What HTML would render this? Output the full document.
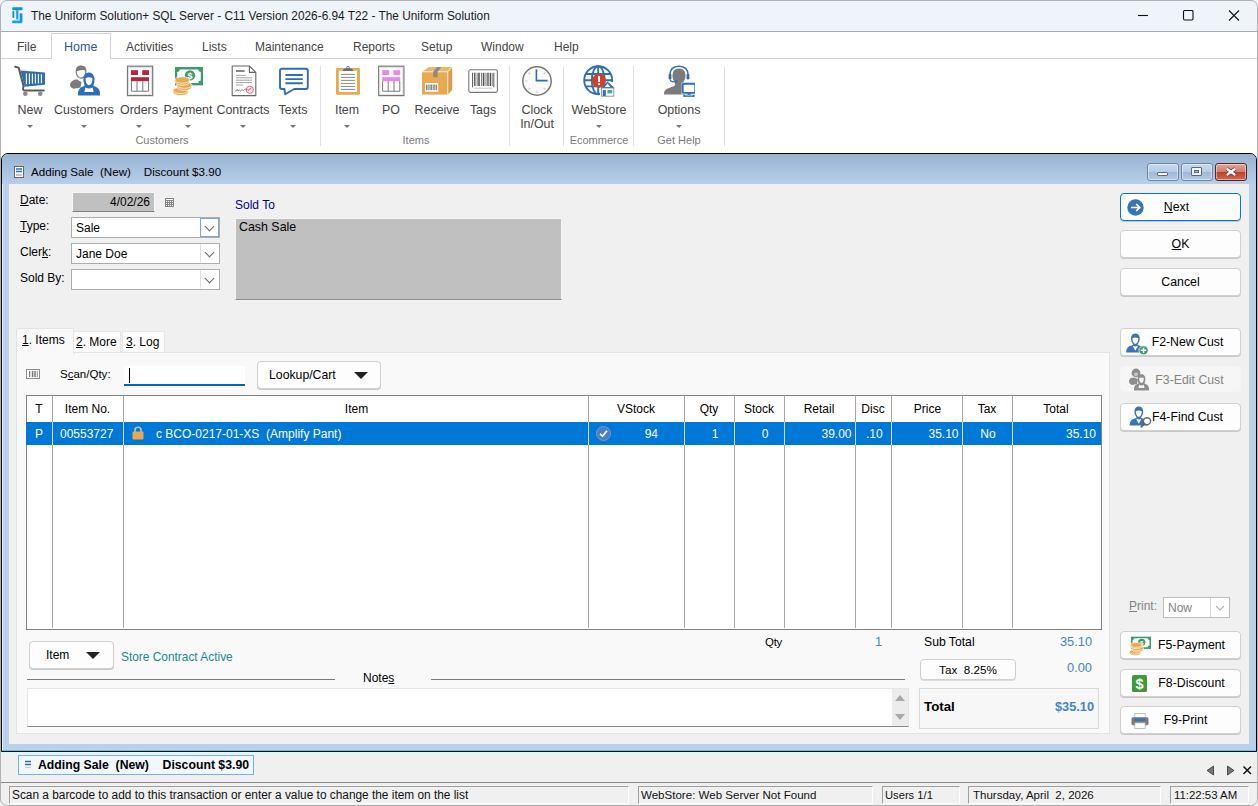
<!DOCTYPE html>
<html>
<head>
<meta charset="utf-8">
<title>The Uniform Solution</title>
<style>
*{box-sizing:border-box;margin:0;padding:0}
html,body{width:1258px;height:806px;overflow:hidden;background:#fff;font-family:"Liberation Sans",sans-serif}
*{font-family:"Liberation Sans",sans-serif}
body{font-family:"Liberation Sans",sans-serif;font-size:12px;color:#000;position:relative}
.abs{position:absolute}
.t{position:absolute;white-space:nowrap;line-height:16px}
u{text-decoration:underline;text-underline-offset:1px}
/* ---------- title bar ---------- */
#titlebar{left:0;top:0;width:1258px;height:32px;background:#eff3fa;border-bottom:1px solid #a9a9a9}
#titlebar .t{left:31px;top:8px;font-size:11.85px;color:#1c1c1c}
/* ---------- menu ---------- */
#menubar{left:0;top:32px;width:1258px;height:27px;background:#fff;border-bottom:1px solid #d2d2d2}
#menubar .t{top:7px;font-size:12px;color:#444}
#hometab{left:51px;top:33px;width:60px;height:26px;background:#fff;border:1px solid #d2d2d2;border-bottom:none}
/* ---------- ribbon ---------- */
#ribbon{left:0;top:59px;width:1258px;height:94px;background:#fff}
.rl{position:absolute;top:44px;font-size:12.4px;color:#444;white-space:nowrap;line-height:14px;text-align:center;transform:translateX(-50%)}
.ra{position:absolute;top:66px;width:0;height:0;border-left:3px solid transparent;border-right:3px solid transparent;border-top:3px solid #777;transform:translateX(-50%)}
.rg{position:absolute;top:74px;font-size:11px;color:#7a7a7a;white-space:nowrap;line-height:14px;transform:translateX(-50%)}
.rsep{position:absolute;top:7px;width:1px;height:80px;background:#e0e0e0}
.ico{position:absolute;top:6px;width:32px;height:32px;transform:translateX(-50%)}
/* ---------- MDI child ---------- */
#mdi{left:1px;top:153px;width:1256px;height:599px;background:#b9d1ea;border:1px solid #000;border-radius:7px 7px 0 0;overflow:hidden}
#mditb{left:0;top:0;width:1254px;height:30px;z-index:2;background:linear-gradient(#98b3d3,#b7cfe9)}
#content{left:7px;top:29px;width:1240px;height:561px;background:#f0f0f0}

.wb{position:absolute;top:9px;width:32px;height:18px;border:1px solid #6f86a3;border-radius:3px;background:linear-gradient(#c6d9ee 0,#b7cde6 48%,#9fb8d6 52%,#b3cae5 100%);box-shadow:inset 0 0 0 1px rgba(255,255,255,.45)}
.wc{border-color:#5a2328;background:linear-gradient(#e0a59a 0,#d27c6d 48%,#bd3f28 52%,#cf6a4e 100%)}
.cb{position:absolute;width:149px;height:21px;background:#fff;border:1px solid #adadad}
.cb span{position:absolute;left:4px;top:2px;line-height:16px;white-space:nowrap}
.cb .dd{position:absolute;right:0;top:0;width:19px;height:19px;border:1px solid transparent;border-left-color:#e0e0e0}
.cb .dd:after{content:"";position:absolute;left:5px;top:4px;width:6px;height:6px;border-right:1.200px solid #666;border-bottom:1.200px solid #666;transform:rotate(45deg) scale(1,1)}
.btn{position:absolute;width:121px;background:#fdfdfd;border:1px solid #d0d0d0;border-radius:4px;box-shadow:0 1px 0 #c8c8c8}
.btn.dis{background:#f6f6f6;border-color:#f5f5f5;box-shadow:none}
.bl{position:absolute;left:0;width:119px;top:5px;line-height:16px;text-align:center;white-space:nowrap;font-size:12.300px}
.tri{position:absolute;width:0;height:0;border-left:7px solid transparent;border-right:7px solid transparent;border-top:7px solid #222}

.gh{text-align:center;font-size:12px}
.gc{color:#fff;font-size:12px}
.gn{letter-spacing:.25px}
/* ---------- bottom ---------- */
#tabbar{left:0;top:752px;width:1258px;height:30px;background:#f0f0f0}
#statusbar{left:0;top:782px;width:1258px;height:24px;background:#f0f0f0;border-top:1px solid #8a8a8a}
.sp{position:absolute;top:3px;height:18px;border:1px solid;border-color:#a0a0a0 #fff #fff #a0a0a0;font-size:12.4px;line-height:16px;padding-left:2px;white-space:nowrap;overflow:hidden;color:#111}
</style>
</head>
<body>
<!-- TITLE BAR -->
<div id="titlebar" class="abs">
  <svg class="abs" style="left:11.500px;top:6.500px" width="11" height="17" viewBox="0 0 11 17"><rect x=".3" y=".3" width="10.200" height="2.900" rx=".6" fill="#0d94d8"/><rect x=".4" y="4.100" width="1.900" height="6.900" rx=".7" fill="#0d8fd6"/><rect x="4.200" y="3.200" width="2.200" height="9.300" fill="#12a0de"/><rect x="7.700" y="6.400" width="2.700" height="8.500" fill="#0d94d8"/><rect x=".1" y="13.400" width="10.100" height="2.900" rx=".6" fill="#16a6e0"/></svg>
  <div class="t">The Uniform Solution+ SQL Server - C11 Version 2026-6.94 T22 - The Uniform Solution</div>
  <svg class="abs" style="left:1138px;top:10px" width="110" height="12" viewBox="0 0 110 12"><path d="M0 5.500H10" stroke="#111" stroke-width="1.100"/><rect x="45.500" y=".5" width="9.500" height="9.500" rx="1.200" fill="none" stroke="#111" stroke-width="1.100"/><path d="M91 .5L101 10.500M101 .5L91 10.500" stroke="#111" stroke-width="1.100"/></svg>
</div>
<!-- MENU BAR -->
<div id="menubar" class="abs">
  <div class="t" style="left:17px">File</div>
  <div class="t" style="left:126px">Activities</div>
  <div class="t" style="left:202px">Lists</div>
  <div class="t" style="left:255px">Maintenance</div>
  <div class="t" style="left:353px">Reports</div>
  <div class="t" style="left:421px">Setup</div>
  <div class="t" style="left:481px">Window</div>
  <div class="t" style="left:554px">Help</div>
</div>
<div id="hometab" class="abs"><div class="t" style="left:12px;top:5px;font-size:12.500px;color:#2b579a">Home</div></div>
<!-- RIBBON -->
<div id="ribbon" class="abs">
<!-- New: cart -->
<svg class="ico" style="left:30px" viewBox="0 0 32 32"><path d="M1.2 1.8 L4.6 2.6 L9.6 21.2 Q8.2 25.4 10.6 25.6 L29.8 25.6" fill="none" stroke="#5a5a5a" stroke-width="2" stroke-linecap="round" stroke-linejoin="round"/><path d="M6.6 5.4 L31 7.4 L31 19.8 L10.6 21.8 Z" fill="#2f6eb5"/><g stroke="#fff" stroke-width="1.1"><path d="M12.4 8.2V19.2M15.4 8.4V19M18.4 8.6V18.8M21.4 8.8V18.6M24.4 9V18.4M27.4 9.2V18.2"/></g><circle cx="11.3" cy="28.8" r="2.3" fill="#8a8a8a"/><circle cx="26.2" cy="28.8" r="2.3" fill="#8a8a8a"/></svg>
<!-- Customers -->
<svg class="ico" style="left:84px" viewBox="0 0 32 32"><path d="M2 19.5 Q2.5 15.5 8.5 14.2 L13.5 17 L12.5 22.5 L6 23.8 Q2 23 2 19.5Z" fill="#7b7b7b"/><path d="M8.2 7.2 Q8 1.2 13 1.2 Q18.4 1.2 17.8 7.4 Q17.4 12.6 13 13.2 Q8.8 12.6 8.2 7.2Z" fill="#fff" stroke="#7b7b7b" stroke-width="1.2"/><path d="M8 6.6 Q7.6 .8 13 .8 Q18.8 .8 18 6.2 Q15 3.6 8 6.6Z" fill="#7b7b7b"/><path d="M10 30.6 Q9.4 23.2 15 21.6 L16.6 20.8 Q14.6 14.6 16 11.4 Q17.6 7.6 21 7.6 Q24.6 7.6 26 11.4 Q27.4 14.6 25.4 20.8 L27 21.6 Q32.6 23.2 32 30.6 Z" fill="#2f6eb5"/><path d="M17.6 13 Q21 11.6 24.4 13 Q24.6 19.6 21 20.2 Q17.4 19.6 17.600 13Z" fill="#fff"/><path d="M16.400 27 L17.4 22.4 Q21 24.4 24.6 22.4 L25.6 27Z" fill="#fff"/></svg>
<!-- Orders -->
<svg class="ico" style="left:139px" viewBox="0 0 32 32"><rect x="4.500" y="1.200" width="25.200" height="29.400" fill="#fff" stroke="#777" stroke-width="1.200"/><rect x="5.700" y="2.400" width="22.800" height="27" fill="none" stroke="#ddd" stroke-width=".8"/><rect x="8" y="5.200" width="7" height="4.800" fill="#b2283b"/><rect x="19.200" y="5.200" width="6.800" height="4.800" fill="#b2283b"/><rect x="8" y="12.200" width="18" height="4" fill="#b2283b"/><path d="M8.400 16.200V26.200H25.600V16.200M14 16.200V26.200M19.800 16.200V26.200" fill="none" stroke="#777" stroke-width="1"/></svg>
<!-- Payment -->
<svg class="ico" style="left:188px" viewBox="0 0 32 32"><rect x="3" y="2" width="28" height="18.400" fill="#3f9a6e"/><path d="M7.800 4.400 H26.200 Q26.400 6.800 28.800 7 V15.400 Q26.400 15.600 26.200 18 H7.800 Q7.600 15.600 5.200 15.400 V7 Q7.600 6.800 7.800 4.400Z" fill="#fff"/><circle cx="18" cy="10.400" r="5.200" fill="#3f9a6e"/><text x="18" y="14" font-size="9" font-weight="bold" fill="#fff" text-anchor="middle" font-family="Liberation Sans">$</text><g fill="#e8a94f" stroke="#fff" stroke-width=".7"><ellipse cx="8.600" cy="27.200" rx="7.600" ry="3.400"/><ellipse cx="8.600" cy="25.400" rx="7.600" ry="3.200"/><ellipse cx="12.400" cy="22" rx="7.600" ry="3.400"/><ellipse cx="12.400" cy="20.200" rx="7.600" ry="3.200"/><ellipse cx="10.200" cy="16.800" rx="7.600" ry="3.400"/><ellipse cx="10.200" cy="15" rx="7.600" ry="3.200"/></g></svg>
<!-- Contracts -->
<svg class="ico" style="left:243px" viewBox="0 0 32 32"><path d="M5.200 1 H22.400 L28.800 7.400 V30.600 H5.200Z" fill="#fff" stroke="#666" stroke-width="1.100" stroke-linejoin="round"/><path d="M22.400 1 V7.400 H28.800" fill="none" stroke="#666" stroke-width="1.100" stroke-linejoin="round"/><path d="M9 6H17.600" stroke="#778" stroke-width="1.800"/><g stroke="#999" stroke-width=".9"><path d="M9 10.400H19M9 12.800H25M9 15.200H25M9 17.600H25M9 20H16"/></g><circle cx="22.800" cy="24.800" r="3.600" fill="#fde" stroke="#e0607a" stroke-width=".9"/><path d="M8.800 26.600 Q10.400 22.400 11 26 Q12.400 24 13.400 26 Q15 23.600 16.400 25.600 Q19 22.400 21 25.400 L24.400 23" fill="none" stroke="#667" stroke-width=".8"/></svg>
<!-- Texts -->
<svg class="ico" style="left:293px" viewBox="0 0 32 32"><path d="M5 3.800 H28.800 Q30.800 3.800 30.800 5.800 V22 Q30.800 24 28.800 24 H17.200 L8.200 29.200 L7.400 24 H5 Q3 24 3 22 V5.800 Q3 3.800 5 3.800Z" fill="#fff" stroke="#2f6eb5" stroke-width="1.900" stroke-linejoin="round"/><path d="M8.400 10H25.800M8.400 14.100H25.800M8.400 18.200H25.800" stroke="#2f6eb5" stroke-width="1.900"/></svg>
<!-- Item: clipboard -->
<svg class="ico" style="left:347px" viewBox="0 0 32 32"><rect x="5" y="3" width="24" height="26.800" rx="1.400" fill="#e8a94f"/><rect x="7.800" y="5.600" width="18.200" height="21.400" fill="#fff"/><path d="M11.200 6 L13.400 3.400 H15.200 Q15 .8 17 .8 Q19 .8 18.800 3.400 H20.600 L22.800 6Z" fill="#6a6a6a"/><circle cx="17" cy="2.600" r=".8" fill="#fff"/><g stroke="#888" stroke-width="1"><path d="M10 9.400H24M10 12.400H24M10 15.400H24M10 18.400H24M10 21.400H24M10 24.400H24"/></g></svg>
<!-- PO -->
<svg class="ico" style="left:391px" viewBox="0 0 32 32"><rect x="3.700" y="1.200" width="25.200" height="29.400" fill="#fff" stroke="#777" stroke-width="1.200"/><rect x="4.900" y="2.400" width="22.800" height="27" fill="none" stroke="#ddd" stroke-width=".8"/><rect x="7.200" y="5.200" width="7" height="4.800" fill="#ee82ee"/><rect x="18.400" y="5.200" width="6.800" height="4.800" fill="#ee82ee"/><rect x="7.200" y="12.200" width="18" height="4" fill="#ee82ee"/><path d="M7.600 16.200V26.200H24.800V16.200M13.200 16.200V26.200M19 16.200V26.200" fill="none" stroke="#777" stroke-width="1"/></svg>
<!-- Receive: box -->
<svg class="ico" style="left:437px" viewBox="0 0 32 32"><path d="M1 6.800 L7.800 2 H31.200 L26.800 6.800Z" fill="#ecb868"/><path d="M26.800 6.800 L31.200 2 V25 L26.800 29.600Z" fill="#dc9c40"/><rect x="1" y="6.800" width="25.800" height="22.800" fill="#e8a94f"/><path d="M1 6.800H26.800V29.600M26.800 6.800L31.200 2" fill="none" stroke="#fff" stroke-width=".8"/><path d="M16 2H20.400L16.600 6.800V12.200H12.200V6.800Z" fill="#8a8a8a"/><rect x="4" y="18" width="13.200" height="8.800" fill="#fff"/><g stroke="#555" stroke-width=".8"><path d="M5.600 19.600V25.200M7.200 19.600V25.200M9 19.600V25.200M10.400 19.600V25.200M12.200 19.600V25.200M13.800 19.600V25.200M15.400 19.600V25.200"/></g></svg>
<!-- Tags: barcode -->
<svg class="ico" style="left:483px" viewBox="0 0 32 32"><rect x="1.800" y="4.800" width="28.600" height="22.600" rx="1.600" fill="#fff" stroke="#777" stroke-width="1.100"/><g stroke="#555"><path d="M5.600 7.800V22.400" stroke-width="1"/><path d="M7.800 7.800V21" stroke-width="1.400"/><path d="M10.200 7.800V21" stroke-width=".8"/><path d="M12 7.800V21" stroke-width="1.600"/><path d="M14.600 7.800V21" stroke-width=".8"/><path d="M16.600 7.800V21" stroke-width="1.600"/><path d="M19 7.800V21" stroke-width=".8"/><path d="M21 7.800V21" stroke-width="1.400"/><path d="M23.400 7.800V21" stroke-width="1.400"/><path d="M25.200 7.800V21" stroke-width=".7"/><path d="M26.800 7.800V22.400" stroke-width="1"/></g><path d="M7.400 23.200H25.600" stroke="#999" stroke-width=".8" stroke-dasharray="1.400 .6"/></svg>
<!-- Clock -->
<svg class="ico" style="left:537px" viewBox="0 0 32 32"><circle cx="16" cy="16" r="14.200" fill="#fafafa" stroke="#777" stroke-width="1.500"/><g stroke="#ccc" stroke-width="1.100"><path d="M16 4V6.400M16 25.600V28M4 16H6.400M25.600 16H28M7.500 7.500L9.200 9.200M24.500 7.500L22.800 9.200M7.500 24.500L9.200 22.800M24.500 24.500L22.800 22.800"/></g><path d="M15.400 4.600V15.600H26.400" fill="none" stroke="#2f6eb5" stroke-width="1.600"/></svg>
<!-- WebStore -->
<svg class="ico" style="left:599px" viewBox="0 0 32 32"><g fill="none" stroke="#2f6eb5" stroke-width="1.900"><circle cx="15.200" cy="15.200" r="14"/><ellipse cx="15.200" cy="15.200" rx="6.400" ry="14"/><path d="M15.200 1.200V29.200M2.600 9H27.800M1.200 15.200H29.200M2.600 21.400H27.800"/></g><path d="M17 17 H32 V32 H17Z" fill="#fff"/><circle cx="16" cy="15.700" r="7" fill="#d0402b"/><rect x="15.100" y="11" width="1.900" height="6" fill="#fff"/><rect x="15.100" y="18.200" width="1.900" height="1.900" fill="#fff"/><path d="M17.600 23 L24.600 16.600 L31.600 23Z" fill="#2f6eb5"/><path d="M21.800 22 L24.600 18.600 L27.400 22Z" fill="#fff"/><rect x="18.400" y="23" width="12.400" height="8.200" fill="#fff" stroke="#8a8a8a" stroke-width=".9"/><rect x="19.800" y="25" width="3" height="6" fill="#2f6eb5"/><rect x="24.400" y="25" width="4.800" height="3.400" fill="#3fa0c0"/></svg>
<!-- Options -->
<svg class="ico" style="left:679px" viewBox="0 0 32 32"><path d="M1 29.400 Q0.600 24.600 5.400 23.200 L11.400 21 Q12.400 19.400 11.800 17.600 Q9.400 15 9.400 10.600 Q9.600 3.600 16 3.600 Q22.400 3.600 22.600 10.600 Q22.600 15 20.200 17.600 Q19.600 19.400 20.600 21 L22 21.600 V29.400Z" fill="#7b7b7b"/><path d="M6.800 10.600 Q6.800 1.200 16 1.200 Q25.200 1.200 25.200 10.600" fill="none" stroke="#2f6eb5" stroke-width="1.500"/><rect x="5.600" y="8.800" width="2.800" height="5.800" rx="1.300" fill="#2f6eb5"/><rect x="23.600" y="8.800" width="2.800" height="5.800" rx="1.300" fill="#2f6eb5"/><path d="M7 14.400 Q7.400 17.200 12.400 16.800" fill="none" stroke="#2f6eb5" stroke-width="1.100"/><ellipse cx="13.200" cy="16.600" rx="1.600" ry="1" fill="#2f6eb5"/><rect x="18.600" y="17.600" width="14.800" height="11.400" fill="#fff"/><rect x="19.700" y="18.700" width="12.600" height="9.200" rx=".8" fill="#fff" stroke="#2f6eb5" stroke-width="1.900"/><rect x="24.400" y="28" width="3.200" height="1.800" fill="#2f6eb5"/><rect x="20.200" y="29.700" width="11.600" height="2.200" rx=".8" fill="#2f6eb5"/><path d="M22 30.800H30" stroke="#fff" stroke-width=".6"/></svg>

<div class="rl" style="left:30px">New</div>
<div class="ra" style="left:30px"></div>
<div class="rl" style="left:84px">Customers</div>
<div class="ra" style="left:84px"></div>
<div class="rl" style="left:139px">Orders</div>
<div class="ra" style="left:139px"></div>
<div class="rl" style="left:188px">Payment</div>
<div class="ra" style="left:188px"></div>
<div class="rl" style="left:243px">Contracts</div>
<div class="ra" style="left:243px"></div>
<div class="rl" style="left:293px">Texts</div>
<div class="ra" style="left:293px"></div>
<div class="rl" style="left:347px">Item</div>
<div class="ra" style="left:347px"></div>
<div class="rl" style="left:391px">PO</div>
<div class="rl" style="left:437px">Receive</div>
<div class="rl" style="left:483px">Tags</div>
<div class="rl" style="left:537px">Clock<br>In/Out</div>
<div class="rl" style="left:599px">WebStore</div>
<div class="ra" style="left:599px"></div>
<div class="rl" style="left:679px">Options</div>
<div class="ra" style="left:679px"></div>
<div class="rg" style="left:162px">Customers</div>
<div class="rg" style="left:416px">Items</div>
<div class="rg" style="left:599px">Ecommerce</div>
<div class="rg" style="left:679px">Get Help</div>
<div class="rsep" style="left:320px"></div>
<div class="rsep" style="left:509px"></div>
<div class="rsep" style="left:563px"></div>
<div class="rsep" style="left:633px"></div>
<div class="rsep" style="left:724px"></div>
</div>
<!-- MDI CHILD -->
<div id="mdi" class="abs">
  <div id="mditb" class="abs">
    <svg class="abs" style="left:12px;top:12px" width="10" height="12" viewBox="0 0 10 12"><rect x=".5" y=".5" width="9" height="11" fill="#fff" stroke="#666" stroke-width="1"/><path d="M2 3H8M2 5.5H8" stroke="#2f6eb5" stroke-width="1.400"/><path d="M2 9H8" stroke="#888" stroke-width="1"/></svg>
    <div class="t" style="left:29px;top:10px;font-size:11.600px;color:#000;white-space:pre">Adding Sale  (New)    Discount $3.90</div>
    <div class="wb" style="left:1145px"><div class="abs" style="left:9px;top:8px;width:11px;height:4px;background:#f4f4f4;border:1px solid #5a6a80;border-radius:1px"></div></div>
    <div class="wb" style="left:1179px"><div class="abs" style="left:9px;top:3px;width:11px;height:9px;background:#f4f4f4;border:1px solid #5a6a80;border-radius:1px"></div><div class="abs" style="left:12px;top:6px;width:5px;height:3px;border:1px solid #5a6a80;background:#9fb8d6"></div></div>
    <div class="wb wc" style="left:1213px"><svg class="abs" style="left:9px;top:3px" width="12" height="10" viewBox="0 0 12 10"><path d="M1.800 1.800L10.200 8M10.200 1.800L1.800 8" stroke="#5a3036" stroke-width="3.800" stroke-linecap="butt"/><path d="M1.800 1.800L10.200 8M10.200 1.800L1.800 8" stroke="#fff" stroke-width="2.300" stroke-linecap="butt"/></svg></div>
  </div>
  <div class="abs" style="left:0;top:6px;width:1px;height:590px;background:rgba(255,255,255,.75)"></div><div class="abs" style="left:0;top:596px;width:1254px;height:1px;background:#35d6f0"></div>
  <div id="content" class="abs">
    <!-- form header (coords relative to content: page x-9, y-183) -->
    <div class="t" style="left:11px;top:9px"><u>D</u>ate:</div>
    <div class="abs" style="left:63px;top:9px;width:83px;height:20px;background:#c0c0c0;border:1px solid #f8f8f8;border-bottom:1px solid #7e7e7e"></div>
    <div class="t" style="left:63px;top:11px;width:78px;text-align:right">4/02/26</div>
    <svg class="abs" style="left:156px;top:15px" width="9" height="9" viewBox="0 0 9 9" shape-rendering="crispEdges"><rect width="9" height="9" fill="#848484"/><rect x="1" y="1" width="7" height="1" fill="#fff"/><rect x="1" y="3" width="1" height="1" fill="#fff"/><rect x="3" y="3" width="1" height="1" fill="#fff"/><rect x="5" y="3" width="1" height="1" fill="#fff"/><rect x="7" y="3" width="1" height="1" fill="#fff"/><rect x="1" y="5" width="1" height="1" fill="#fff"/><rect x="3" y="5" width="1" height="1" fill="#fff"/><rect x="5" y="5" width="1" height="1" fill="#fff"/><rect x="7" y="5" width="1" height="1" fill="#fff"/><rect x="1" y="7" width="1" height="1" fill="#fff"/><rect x="3" y="7" width="1" height="1" fill="#fff"/><rect x="5" y="7" width="1" height="1" fill="#fff"/><rect x="7" y="7" width="1" height="1" fill="#fff"/></svg>
    <div class="t" style="left:11px;top:35px"><u>T</u>ype:</div>
    <div class="cb" style="left:62px;top:34px"><span>Sale</span><i class="dd" style="border-color:#7aa7d9"></i></div>
    <div class="t" style="left:11px;top:61px">Cler<u>k</u>:</div>
    <div class="cb" style="left:62px;top:60px"><span>Jane Doe</span><i class="dd"></i></div>
    <div class="t" style="left:11px;top:87px">Sold By:</div>
    <div class="cb" style="left:62px;top:86px"><span></span><i class="dd"></i></div>
    <div class="t" style="left:226px;top:14px;color:#00008b">Sold To</div>
    <div class="abs" style="left:226px;top:35px;width:327px;height:82px;background:#c0c0c0;border:1px solid #f4f4f4;border-bottom:1px solid #8c8c8c"></div>
    <div class="t" style="left:230px;top:36px;font-size:12.400px">Cash Sale</div>
    <!-- right buttons -->
    <div class="btn" style="left:1111px;top:10px;height:28px;border-color:#0078d7"><svg class="abs" style="left:6px;top:5px" width="17" height="17" viewBox="0 0 17 17"><circle cx="8.500" cy="8.500" r="8.200" fill="#3b74b3"/><path d="M4 8.500H12.500M9.200 5L12.700 8.500L9.200 12" fill="none" stroke="#fff" stroke-width="1.700"/></svg><div class="bl" style="left:0;width:111px"><u>N</u>ext</div></div>
    <div class="btn" style="left:1111px;top:47px;height:28px"><div class="bl"><u>O</u>K</div></div>
    <div class="btn" style="left:1111px;top:85px;height:28px"><div class="bl">Cancel</div></div>
    <div class="btn" style="left:1111px;top:145px;height:28px"><div class="bl" style="left:7px">F2-New Cust</div>
      <svg class="abs" style="left:4px;top:3px" width="24" height="23" viewBox="0 0 22 22" preserveAspectRatio="none"><path d="M1 19.500Q1 14 6 13L7.500 12.200Q5 9 5.500 5.500Q6.200 1.500 9.500 1.500Q12.800 1.500 13.500 5.500Q14 9 11.500 12.200L13 13Q18 14 18 19.500Z" fill="#3b74b3"/><path d="M6.800 6Q9.500 4.500 12.200 6Q12.200 10.500 9.500 11.500Q6.800 10.500 6.800 6Z" fill="#fff"/><path d="M7 13.200L9.500 18L12 13.200Q9.500 14.500 7 13.200Z" fill="#fff"/><circle cx="17" cy="17.500" r="4.300" fill="#3f9a6e" stroke="#fff" stroke-width=".7"/><path d="M14.500 17.500H19.500M17 15V20" stroke="#fff" stroke-width="1.300"/></svg></div>
    <div class="btn dis" style="left:1111px;top:183px;height:26px"><div class="bl" style="left:9px;color:#838383">F3-Edit Cust</div>
      <svg class="abs" style="left:7px;top:1px" width="22" height="23" viewBox="0 0 22 23"><circle cx="8" cy="5" r="4.400" fill="#8d8d8d"/><path d="M5.800 5.200Q8 4 10.200 5.200Q10 8.200 8 8.600Q6 8.200 5.800 5.200Z" fill="#c4c4c4"/><path d="M1 13Q1.500 9.500 5 9.500L10 11L9 16L4 17Q1 16 1 13Z" fill="#8d8d8d"/><path d="M6 22.500Q5.500 17 9.500 16L10.500 15.500Q9 11 10 8.500Q11.200 6 13.500 6Q15.800 6 17 8.500Q18 11 16.500 15.500L17.500 16Q21.500 17 21 22.500Z" fill="#8d8d8d"/><path d="M11.200 10Q13.500 9 15.800 10Q15.800 14.500 13.500 15Q11.200 14.500 11.200 10Z" fill="#f4f4f4"/><path d="M10.500 20L11.200 16.800Q13.500 18 15.800 16.800L16.500 20Z" fill="#f4f4f4"/></svg></div>
    <div class="btn" style="left:1111px;top:220px;height:28px"><div class="bl" style="left:7px">F4-Find Cust</div>
      <svg class="abs" style="left:8px;top:1px" width="24" height="23" viewBox="0 0 22 22" preserveAspectRatio="none"><path d="M.5 19.500Q.5 14 5.500 13L7 12.200Q4.500 9 5 5.500Q5.700 1.500 9 1.500Q12.300 1.500 13 5.500Q13.500 9 11 12.200L12.500 13Q17.500 14 17.500 19.500Z" fill="#3b74b3"/><path d="M6.300 6Q9 4.500 11.700 6Q11.700 10.500 9 11.500Q6.300 10.500 6.300 6Z" fill="#fff"/><path d="M6.500 13.200L9 18L11.500 13.200Q9 14.500 6.500 13.200Z" fill="#fff"/><circle cx="16.500" cy="15.500" r="3.300" fill="#fff" stroke="#666" stroke-width="1.300"/><path d="M14 18L11.500 20.800" stroke="#666" stroke-width="1.800" stroke-linecap="round"/></svg></div>
    <div class="t" style="left:1120px;top:415px;color:#838383"><u>P</u>rint:</div>
    <div class="abs" style="left:1154px;top:414px;width:67px;height:21px;background:#fff;border:1px solid #bdbdbd"><div class="t" style="left:4px;top:2px;color:#838383">Now</div><div class="abs" style="left:46px;top:0;width:1px;height:19px;background:#d5d5d5"></div><svg class="abs" style="left:51px;top:7px" width="10" height="6" viewBox="0 0 10 6"><path d="M1 1L5 5L9 1" fill="none" stroke="#b0b0b0" stroke-width="1.100"/></svg></div>
    <div class="btn" style="left:1111px;top:448px;height:28px"><div class="bl" style="left:11px">F5-Payment</div>
      <svg class="abs" style="left:8px;top:4px" width="22" height="20" viewBox="0 0 32 30" preserveAspectRatio="none"><rect x="3" y="1" width="29" height="18.400" fill="#3f9a6e"/><path d="M7.800 3.400H27.200Q27.400 5.800 29.800 6V14.400Q27.400 14.600 27.200 17H7.800Q7.600 14.600 5.200 14.400V6Q7.600 5.800 7.800 3.400Z" fill="#fff"/><circle cx="18.500" cy="9.400" r="5.400" fill="#3f9a6e"/><text x="18.500" y="13" font-size="9" font-weight="bold" fill="#fff" text-anchor="middle" font-family="Liberation Sans">$</text><g fill="#e8a94f" stroke="#fff" stroke-width=".9"><ellipse cx="9" cy="25.600" rx="8.400" ry="3.800"/><ellipse cx="9" cy="23.600" rx="8.400" ry="3.600"/><ellipse cx="12.800" cy="20.400" rx="8.400" ry="3.800"/><ellipse cx="12.800" cy="18.400" rx="8.400" ry="3.600"/><ellipse cx="10.600" cy="15.200" rx="8.400" ry="3.800"/><ellipse cx="10.600" cy="13.400" rx="8.400" ry="3.600"/></g></svg></div>
    <div class="btn" style="left:1111px;top:486px;height:28px"><div class="bl" style="left:11px">F8-Discount</div>
      <svg class="abs" style="left:11px;top:5px" width="15" height="17" viewBox="0 0 15 17"><rect width="15" height="17" rx="1.500" fill="#3f9a3a"/><text x="7.500" y="13.800" font-size="14.500" font-weight="bold" fill="#fff" text-anchor="middle" font-family="Liberation Sans">$</text></svg></div>
    <div class="btn" style="left:1111px;top:523px;height:28px"><div class="bl" style="left:5px">F9-Print</div>
      <svg class="abs" style="left:10px;top:6px" width="18" height="16" viewBox="0 0 19 17"><rect x="4" y=".5" width="11" height="5" fill="#fff" stroke="#aaa" stroke-width=".8"/><rect x=".5" y="4.500" width="18" height="8.500" rx="1.500" fill="#7a7a7a"/><rect x="3.500" y="5.500" width="12" height="3" fill="#3b74b3"/><rect x="4" y="10.500" width="11" height="6" fill="#fff" stroke="#aaa" stroke-width=".8"/></svg></div>
    <!-- tabs -->
    <div class="abs" style="left:7px;top:169px;width:1094px;height:382px;background:#f9f9f9;border:1px solid #e3e3e3"></div>
    <div class="abs" style="left:64px;top:148px;width:48px;height:21px;background:#fcfcfc;border:1px solid #e6e6e6;border-bottom:none;border-radius:2px 2px 0 0"><div class="t" style="left:2px;top:2px"><u>2</u>. More</div></div>
    <div class="abs" style="left:113px;top:148px;width:43px;height:21px;background:#fcfcfc;border:1px solid #e6e6e6;border-bottom:none;border-radius:2px 2px 0 0"><div class="t" style="left:3px;top:2px"><u>3</u>. Log</div></div>
    <div class="abs" style="left:7px;top:145px;width:58px;height:26px;background:#f9f9f9;border:1px solid #e3e3e3;border-bottom:none;border-radius:2px 2px 0 0"><div class="t" style="left:5px;top:3px"><u>1</u>. Items</div></div>
    <!-- scan row -->
    <svg class="abs" style="left:17px;top:186px" width="14" height="10" viewBox="0 0 14 10" shape-rendering="crispEdges"><rect x=".5" y=".5" width="13" height="9" fill="#fff" stroke="#8e8e8e"/><rect x="3" y="2" width="1" height="6" fill="#7a7a7a"/><rect x="4" y="2" width="2" height="6" fill="#e4e4e4"/><rect x="6" y="2" width="1" height="6" fill="#7a7a7a"/><rect x="7" y="2" width="1" height="6" fill="#d0d0d0"/><rect x="8" y="2" width="2" height="6" fill="#9c9c9c"/><rect x="10" y="2" width="1" height="6" fill="#e4e4e4"/><rect x="11" y="2" width="1" height="6" fill="#a8a8a8"/></svg>
    <div class="t" style="left:51px;top:183px;font-size:11.520px">S<u>c</u>an/Qty:</div>
    <div class="abs" style="left:115px;top:183px;width:121px;height:20px;background:#fff;border-bottom:2px solid #0067c0"></div>
    <div class="abs" style="left:120px;top:185px;width:1px;height:15px;background:#000"></div>
    <div class="btn" style="left:248px;top:178px;width:124px;height:28px"><div class="t" style="left:11px;top:5px;font-size:12.260px">Lookup/Cart</div><div class="tri" style="left:96px;top:10px"></div></div>
    <!-- table -->
    <div id="grid" class="abs" style="left:17px;top:212px;width:1076px;height:235px;background:#fff;border:1px solid #828282"><div class="abs" style="left:-1px;top:-1px;width:1076px;height:235px"><div class="abs" style="left:0;top:27px;width:1075px;height:23px;background:#0078d7"></div>
<div class="abs" style="left:26px;top:0;width:1px;height:233px;background:#a6a6a6"></div>
<div class="abs" style="left:26px;top:27px;width:1px;height:23px;background:#d4dde6"></div>
<div class="abs" style="left:97px;top:0;width:1px;height:233px;background:#a6a6a6"></div>
<div class="abs" style="left:97px;top:27px;width:1px;height:23px;background:#d4dde6"></div>
<div class="abs" style="left:562px;top:0;width:1px;height:233px;background:#a6a6a6"></div>
<div class="abs" style="left:562px;top:27px;width:1px;height:23px;background:#d4dde6"></div>
<div class="abs" style="left:658px;top:0;width:1px;height:233px;background:#a6a6a6"></div>
<div class="abs" style="left:658px;top:27px;width:1px;height:23px;background:#d4dde6"></div>
<div class="abs" style="left:708px;top:0;width:1px;height:233px;background:#a6a6a6"></div>
<div class="abs" style="left:708px;top:27px;width:1px;height:23px;background:#d4dde6"></div>
<div class="abs" style="left:758px;top:0;width:1px;height:233px;background:#a6a6a6"></div>
<div class="abs" style="left:758px;top:27px;width:1px;height:23px;background:#d4dde6"></div>
<div class="abs" style="left:829px;top:0;width:1px;height:233px;background:#a6a6a6"></div>
<div class="abs" style="left:829px;top:27px;width:1px;height:23px;background:#d4dde6"></div>
<div class="abs" style="left:865px;top:0;width:1px;height:233px;background:#a6a6a6"></div>
<div class="abs" style="left:865px;top:27px;width:1px;height:23px;background:#d4dde6"></div>
<div class="abs" style="left:936px;top:0;width:1px;height:233px;background:#a6a6a6"></div>
<div class="abs" style="left:936px;top:27px;width:1px;height:23px;background:#d4dde6"></div>
<div class="abs" style="left:986px;top:0;width:1px;height:233px;background:#a6a6a6"></div>
<div class="abs" style="left:986px;top:27px;width:1px;height:23px;background:#d4dde6"></div>
<div class="t gh" style="top:6px;left:0px;width:26px">T</div>
<div class="t gh" style="top:6px;left:26px;width:71px">Item No.</div>
<div class="t gh" style="top:6px;left:98px;width:465px">Item</div>
<div class="t gh" style="top:6px;left:562px;width:96px">VStock</div>
<div class="t gh" style="top:6px;left:658px;width:50px">Qty</div>
<div class="t gh" style="top:6px;left:708px;width:50px">Stock</div>
<div class="t gh" style="top:6px;left:758px;width:70px">Retail</div>
<div class="t gh" style="top:6px;left:829px;width:36px">Disc</div>
<div class="t gh" style="top:6px;left:866px;width:71px">Price</div>
<div class="t gh" style="top:6px;left:936px;width:50px">Tax</div>
<div class="t gh" style="top:6px;left:986px;width:88px">Total</div>
<div class="t gc" style="margin-top:1px;left:-27px;width:80px;text-align:center;top:30px">P</div>
<div class="t gc" style="margin-top:1px;left:34px;top:30px">00553727</div>
<svg class="abs" style="left:106px;top:31px" width="12" height="14" viewBox="0 0 12 14"><path d="M3 6V4Q3 1.200 6 1.200Q9 1.200 9 4V6" fill="none" stroke="#b9c3cc" stroke-width="1.600"/><rect x=".5" y="5.500" width="11" height="8" rx="1" fill="#e8a94f"/></svg>
<div class="t gc" style="margin-top:1px;left:130px;top:30px;white-space:pre">c BCO-0217-01-XS  (Amplify Pant)</div>
<svg class="abs" style="left:570px;top:31px" width="15" height="15" viewBox="0 0 15 15"><circle cx="7.500" cy="7.500" r="7" fill="#4a7ebd" stroke="#7fa6d8" stroke-width=".8"/><path d="M4 7.800L6.500 10.200L11 4.800" fill="none" stroke="#fff" stroke-width="1.700"/></svg>
<div class="t gc" style="margin-top:1px;right:444.0px;top:30px">94</div>
<div class="t gc" style="margin-top:1px;right:383.5px;top:30px">1</div>
<div class="t gc" style="margin-top:1px;right:333.5px;top:30px">0</div>
<div class="t gc" style="margin-top:1px;right:250.5px;top:30px">39.00</div>
<div class="t gc" style="margin-top:1px;left:840px;top:30px">.10</div>
<div class="t gc" style="margin-top:1px;right:143.5px;top:30px">35.10</div>
<div class="t gc" style="margin-top:1px;left:922px;width:80px;text-align:center;top:30px">No</div>
<div class="t gc" style="margin-top:1px;right:6.0px;top:30px">35.10</div></div></div>
    <!-- bottom row -->
    <div class="btn" style="left:20px;top:458px;width:85px;height:28px"><div class="t" style="left:16px;top:5px">Item</div><div class="tri" style="left:56px;top:10px"></div></div>
    <div class="t" style="left:112px;top:466px;color:#1a8a8a;font-size:11.900px">Store Contract Active</div>
    <div class="abs" style="left:18px;top:496px;width:308px;height:1px;background:#7a7a7a"></div>
    <div class="abs" style="left:422px;top:496px;width:474px;height:1px;background:#7a7a7a"></div>
    <div class="t" style="left:354px;top:487px">Note<u>s</u></div>
    <div class="abs" style="left:18px;top:505px;width:882px;height:39px;background:#fff;border:1px solid #e6e6e6;border-bottom:1px solid #8a8a8a"></div>
    <div class="abs" style="left:883px;top:506px;width:16px;height:37px;background:#ececec"></div>
    <div class="abs" style="left:886px;top:512px;width:0;height:0;border-left:5px solid transparent;border-right:5px solid transparent;border-bottom:6px solid #a8a8a8"></div>
    <div class="abs" style="left:886px;top:531px;width:0;height:0;border-left:5px solid transparent;border-right:5px solid transparent;border-top:6px solid #a8a8a8"></div>
    <!-- totals -->
    <div class="t" style="left:756px;top:451px;font-size:11.400px;letter-spacing:-.2px">Qty</div>
    <div class="t" style="left:800px;top:451px;width:73px;text-align:right;color:#4483c7;font-size:12.800px">1</div>
    <div class="t" style="left:915px;top:451px;font-size:12.200px">Sub Total</div>
    <div class="t" style="left:1000px;top:451px;width:83px;text-align:right;color:#4483c7;font-size:12.800px">35.10</div>
    <div class="btn" style="left:911px;top:476px;width:96px;height:21px;border-radius:4px;box-shadow:0 1px 0 #dcdcdc"><div class="t" style="left:0;top:2px;width:94px;text-align:center;white-space:pre;font-size:11.700px">Tax  8.25%</div></div>
    <div class="t" style="left:1000px;top:477px;width:83px;text-align:right;color:#4483c7;font-size:12.800px">0.00</div>
    <div class="abs" style="left:910px;top:505px;width:180px;height:41px;background:#f7f7f7;border:1px solid #dadada"></div>
    <div class="t" style="left:915px;top:516px;font-weight:bold;font-size:13.300px">Total</div>
    <div class="t" style="left:1000px;top:516px;width:85px;text-align:right;color:#4483c7;font-weight:bold;font-size:12.750px">$35.10</div>
  </div>
</div>
<!-- BOTTOM -->
<div id="tabbar" class="abs">
  <div class="abs" style="left:18px;top:3px;width:236px;height:20px;background:#f1f7fd;border:1px solid #6fb2f2"></div>
  <svg class="abs" style="left:24px;top:8px" width="8" height="10" viewBox="0 0 8 10"><path d="M1 1.500H7M1 4.500H7" stroke="#2f6eb5" stroke-width="1.600"/><path d="M1 7.500H7" stroke="#c8c8c8" stroke-width="1"/></svg>
  <div class="t" style="left:38px;top:5px;font-size:12.250px;font-weight:bold;white-space:pre">Adding Sale  (New)    Discount $3.90</div>
  <svg class="abs" style="left:1206px;top:13px" width="46" height="11" viewBox="0 0 46 11"><path d="M7.500 1V10L1 5.500Z" fill="#777" stroke="#333" stroke-width=".8"/><path d="M21.500 1V10L28 5.500Z" fill="#777" stroke="#333" stroke-width=".8"/><path d="M37.500 1.500L45 9M45 1.500L37.500 9" stroke="#111" stroke-width="1.500"/></svg>
</div>
<div id="statusbar" class="abs">
  <div class="sp" style="left:9px;width:620px;font-size:11.870px">Scan a barcode to add to this transaction or enter a value to change the item on the list</div>
  <div class="sp" style="left:638px;width:235px;font-size:11.550px">WebStore: Web Server Not Found</div>
  <div class="sp" style="left:882px;width:78px;font-size:11.200px">Users 1/1</div>
  <div class="sp" style="left:968px;width:193px;white-space:pre;font-size:11.530px;padding-left:4px">Thursday, April  2, 2026</div>
  <div class="sp" style="left:1170px;width:79px;font-size:11.410px;padding-left:3px">11:22:53 AM</div>
</div>
<div class="abs" style="left:0;top:0;width:1258px;height:806px;border:1px solid #b2b2b2;border-radius:7px;pointer-events:none"></div>
</body>
</html>
